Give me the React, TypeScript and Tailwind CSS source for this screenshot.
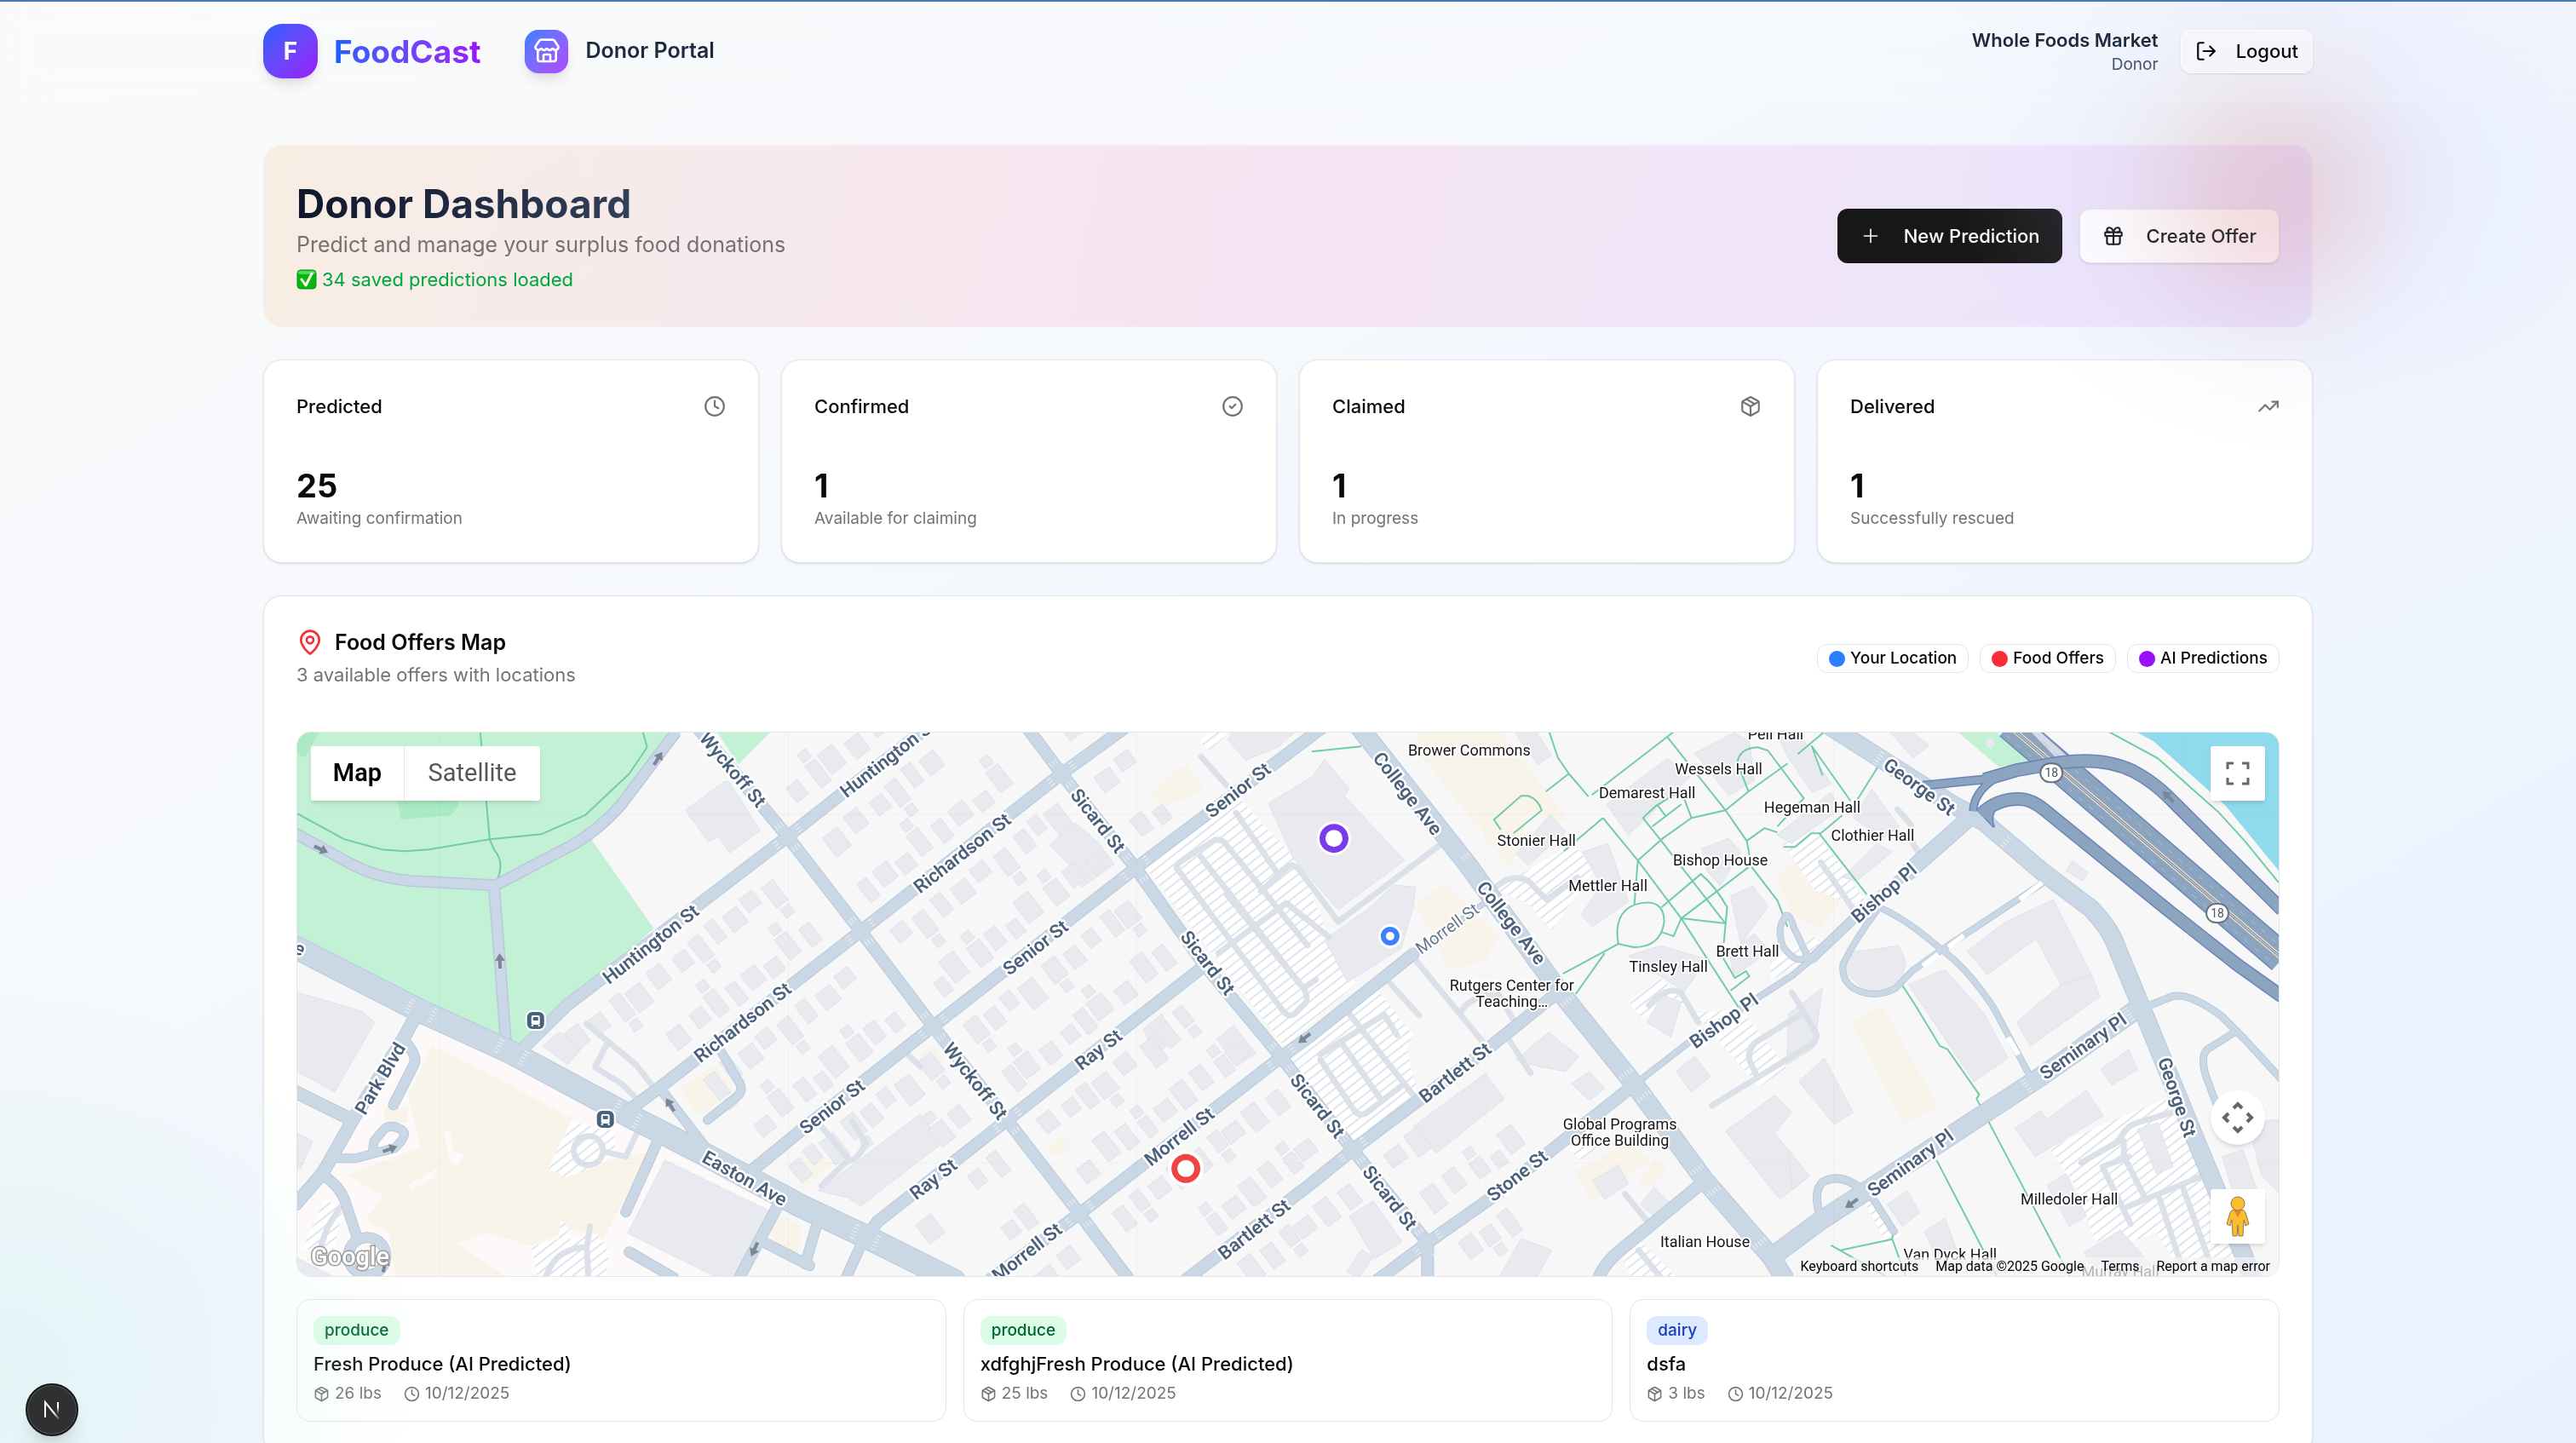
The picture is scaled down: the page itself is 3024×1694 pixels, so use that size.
import React from 'react';
import { CircleCheck, Clock, Gift, LogOut, MapPin, Package, Plus, Store, TrendingUp } from 'lucide-react';

type IconType = React.ComponentType<{ className?: string; strokeWidth?: number }>;

interface Stat {
  label: string;
  value: number;
  note: string;
  icon: IconType;
}

const STATS: Stat[] = [
  { label: 'Predicted', value: 25, note: 'Awaiting confirmation', icon: Clock },
  { label: 'Confirmed', value: 1, note: 'Available for claiming', icon: CircleCheck },
  { label: 'Claimed', value: 1, note: 'In progress', icon: Package },
  { label: 'Delivered', value: 1, note: 'Successfully rescued', icon: TrendingUp },
];

const LEGEND = [
  { label: 'Your Location', dot: 'bg-[#2b7fff]' },
  { label: 'Food Offers', dot: 'bg-[#fb2c36]' },
  { label: 'AI Predictions', dot: 'bg-[#9810fa]' },
];

const OFFERS = [
  { type: 'produce', badge: 'bg-[#dcfce7] text-[#016630]', title: 'Fresh Produce (AI Predicted)', weight: '26 lbs', date: '10/12/2025' },
  { type: 'produce', badge: 'bg-[#dcfce7] text-[#016630]', title: 'xdfghjFresh Produce (AI Predicted)', weight: '25 lbs', date: '10/12/2025' },
  { type: 'dairy', badge: 'bg-[#dbeafe] text-[#193cb8]', title: 'dsfa', weight: '3 lbs', date: '10/12/2025' },
];

/* ---------- map data ---------- */

const ROADS: { d: string; w: number }[] = [
  { d: 'M815 850 L924 982 L1010 1093 L1095 1205 L1182 1315 L1267 1425 L1325 1502', w: 13 },
  { d: 'M1204 852 L1246 908 L1333 1019 L1414 1133 L1504 1241 L1588 1350 L1676 1459 L1676 1502', w: 13 },
  { d: 'M606 1238 L665 1180 L924 982 L986 933 L1096 848', w: 13 },
  { d: 'M738 1303 L776 1275 L1010 1093 L1246 908 L1326 850', w: 13 },
  { d: 'M880 1376 L940 1327 L1062 1231 L1095 1205 L1333 1019 L1560 848', w: 13 },
  { d: 'M1016 1453 L1030 1434 L1182 1315 L1412 1135', w: 13 },
  { d: 'M1160 1504 L1267 1425 L1504 1241 L1540 1215 L1659 1120', w: 13 },
  { d: 'M1659 1120 L1747 1057', w: 5 },
  { d: 'M1393 1502 L1540 1389 L1588 1350 L1747 1231 L1829 1165', w: 13 },
  { d: 'M1616 1504 L1676 1459 L1750 1407 L1917 1275', w: 13 },
  { d: 'M1917 1275 L1984 1223 L2106 1144 L2132 1122', w: 6 },
  { d: 'M2128 1125 L2177 1078 L2253 1013', w: 10 },
  { d: 'M2240 1024 L2307 965', w: 18 },
  { d: 'M1877 1502 Q1880 1488 1900 1470 L2001 1387', w: 13 },
  { d: 'M1590 846 L1724 1016 L1829 1161 L1919 1273 L2001 1385 L2080 1476 L2096 1502', w: 21 },
  { d: 'M2080 1476 L2138 1433 L2192 1398 L2398 1263 L2513 1182', w: 21 },
  { d: 'M2145 850 L2291 943 L2330 965 L2398 1023 L2456 1067 Q2480 1092 2488 1118 L2515 1183 L2578 1337 L2636 1477 L2646 1504', w: 20 },
  { d: 'M340 1109 L493 1187 L596 1234 L738 1310 L826 1355 L940 1416 L1016 1452 L1120 1504', w: 26 },
  { d: 'M487 1193 L474 1217 L416 1310 L378 1377 L346 1414', w: 14 },
  { d: 'M340 1279 L413 1315', w: 14 },
  { d: 'M474 1222 Q490 1240 485 1250 L461 1297', w: 11 },
  { d: 'M394 1360 L416 1360 L462 1348 Q480 1332 470 1326 Q455 1318 448 1328 L438 1340 L436 1354', w: 9 },
  { d: 'M378 1380 Q398 1392 404 1410 L418 1452', w: 11 },
  { d: 'M430 1453 a22 22 0 1 0 0.1 0', w: 11 },
  { d: 'M770 1343 L734 1423', w: 11 },
  { d: 'M914 1413 L868 1499', w: 12 },
  { d: 'M899 1460 L950 1486', w: 11 },
  { d: 'M738 1470 L790 1500', w: 11 },
  { d: 'M845 1233 L868 1272 Q872 1282 864 1288 L830 1315', w: 9 },
  { d: 'M776 1280 L826 1345', w: 10 },
  { d: 'M962 1425 L945 1484', w: 11 },
  { d: 'M1012 1458 L992 1502', w: 11 },
  { d: 'M2211 1067 Q2240 1080 2280 1115 Q2310 1136 2341 1183 L2383 1262', w: 6 },
  { d: 'M2203 1070 Q2180 1100 2164 1132 Q2162 1150 2176 1160 Q2201 1174 2226 1160 L2245 1140 L2280 1115 L2398 1037', w: 6 },
  { d: 'M2099 1075 Q2085 1085 2093 1110 Q2110 1135 2122 1122 L2106 1088 Q2102 1072 2096 1075', w: 6 },
  { d: 'M2525 1180 L2550 1170 Q2570 1164 2609 1193 L2636 1220 L2680 1268', w: 7 },
  { d: 'M2624 1212 L2592 1232 Q2584 1240 2590 1262 L2608 1310', w: 7 },
  { d: 'M2138 1430 Q2128 1400 2140 1388 Q2160 1376 2186 1396', w: 8 },
  { d: 'M2196 1402 L2224 1446', w: 7 },
];

const PARK_ROADS = [
  'M340 975 L409 1013 Q440 1030 481 1034 L581 1039 L669 993 Q700 976 728 945 L793 859',
  'M579 1040 L586 1128 L593 1222',
];

const DRIVES = [
  'M1382 1020 Q1380 1014 1388 1010 L1426 986 Q1434 984 1440 992 L1535 1110',
  'M1382 1020 L1504 1184 Q1512 1196 1520 1190 L1533 1177 Q1536 1170 1530 1160 L1440 1050',
  'M1409 1005 L1530 1160 L1545 1150',
  'M1430 1119 L1510 1060 L1560 1100',
  'M1480 1046 L1514 1016 Q1520 1014 1526 1022 L1571 1082 L1689 993',
  'M1451 954 L1499 1024',
  'M1410 888 L1440 922',
  'M1550 1238 L1572 1224 L1625 1191 L1640 1215',
  'M1550 1244 L1590 1304 Q1597 1312 1605 1306 L1645 1275',
  'M1574 1223 L1620 1289',
  'M1584 1190 L1664 1292',
  'M1628 1150 L1666 1192',
  'M1661 1126 L1740 1222',
  'M1714 1190 Q1724 1168 1760 1168 L1776 1196',
  'M1770 1218 L1797 1260',
  'M1740 1052 L1768 1033 Q1790 1026 1800 1040 L1816 1056 L1852 1030',
  'M688 1202 L746 1250 L767 1277',
  'M711 1227 L698 1253 L730 1273 L750 1293',
  'M690 1334 a17 17 0 1 0 0.1 0 M708 1352 L734 1358 L750 1324',
  'M640 1500 Q650 1466 688 1464 L692 1440 M688 1464 L690 1500',
  'M398 1418 L384 1440 L376 1462',
  'M964 1323 L996 1361 Q1004 1366 1016 1342 L1000 1317',
  'M994 1363 L964 1392',
  'M1062 1235 L1080 1252',
  'M1936 1180 Q1958 1156 1974 1166 L1994 1200',
  'M2228 950 L2244 968 L2246 990 L2256 1006',
  'M2138 1012 L2178 1070',
  'M2010 1298 L2062 1266 L2130 1224 Q2136 1216 2130 1208 L2104 1165',
  'M2062 1262 L2054 1244 Q2052 1230 2064 1222 L2112 1192',
  'M1908 1402 L1936 1436',
  'M1924 1468 L1950 1500',
  'M2444 1365 L2488 1340 Q2496 1322 2510 1318 L2551 1306',
  'M2494 1340 L2494 1357 L2519 1407',
  'M2469 1370 L2500 1358 M2469 1370 L2502 1437',
  'M2498 1417 L2588 1380',
  'M2536 1407 L2563 1490',
  'M2563 1393 L2598 1490',
];

const LOTS = [
  '1344,1018 1455,937 1545,1035 1540,1050 1560,1100 1592,1155 1508,1228',
  '1512,1248 1616,1161 1659,1215 1651,1231 1666,1289 1586,1340',
  '1408,872 1420,858 1446,858 1420,880',
  '670,1317 720,1328 722,1355 700,1370 663,1382 643,1372',
  '623,1463 655,1455 657,1434 664,1436 668,1455 700,1448 714,1470 710,1500 630,1500',
  '380,1408 402,1420 390,1470 354,1466',
  '1756,1044 1846,990 1872,1020 1822,1092 1796,1062',
  '1912,1176 1950,1148 2000,1200 1966,1172 1928,1196',
  '1990,1190 2044,1184 2098,1254 2066,1276',
  '2094,990 2132,974 2192,1060 2170,1060 2130,1044',
  '1900,1466 1922,1454 1970,1500 1916,1500',
  '2406,1347 2548,1288 2590,1380 2630,1484 2556,1484 2532,1447 2502,1458 2460,1457 2437,1393',
  '2190,1412 2200,1408 2232,1450 2216,1462',
  '1842,1350 1862,1334 1886,1340 1856,1362',
  '2078,1130 2130,1100 2140,1116 2080,1150',
];

const TAN = [
  '506,1228 585,1267 671,1313 642,1372 761,1353 707,1457 673,1443 623,1463 570,1447 535,1460 593,1498 464,1499 455,1447 428,1433 449,1403 405,1380 493,1347 478,1287',
  '450,1300 478,1300 478,1318 450,1318',
  '1659,875 1668,859 1762,859 1842,964 1793,954 1784,1000 1770,1016',
  '1350,930 1392,897 1414,926 1366,948',
  '1660,1066 1694,1036 1722,1062 1760,1100 1744,1128 1700,1140 1684,1096',
  '798,1278 838,1250 862,1280 818,1310',
  '1080,1238 1092,1226 1108,1246 1096,1256',
  '940,1352 954,1342 976,1368 940,1396',
  '1228,1350 1246,1334 1258,1344 1240,1360',
  '1848,1376 1912,1340 1938,1362 1870,1412',
  '1924,1388 1944,1360 1958,1372 1936,1396',
  '2085,1030 2104,1010 2150,1044 2160,1060 2136,1092 2104,1072',
  '2174,1200 2210,1180 2276,1300 2236,1320',
  '890,1430 914,1426 940,1440 936,1474 912,1462',
];

const BUILDINGS = [
  '348,1165 424,1187 439,1200 392,1282 348,1258',
  '348,1330 366,1340 352,1372 348,1372',
  '348,1477 392,1500 348,1500',
  '780,1362 903,1422 868,1500 837,1498 736,1448',
  '852,917 855,917 892,975 856,1001 843,982 831,988 804,951 850,917',
  '636,1228 656,1212 684,1228 666,1250',
  '1489,943 1540,912 1555,891 1584,926 1578,934 1649,1010 1571,1068 1518,1007',
  '1441,868 1448,859 1520,859 1500,877 1462,892',
  '1555,1103 1610,1064 1636,1039 1662,1041 1659,1066 1645,1113 1582,1153',
  '1232,992 1250,975 1262,966 1288,988 1308,1014 1270,1042 1254,1014',
  '960,1398 1080,1308 1106,1342 1010,1416 994,1406',
  '1342,1208 1364,1190 1378,1222 1356,1238',
  '1428,1220 1448,1204 1474,1236 1452,1252',
  '1660,1322 1744,1260 1766,1290 1686,1354',
  '1780,1244 1818,1212 1854,1240 1838,1258 1806,1252',
  '1845,1272 1866,1258 1884,1278 1866,1292',
  '1584,1428 1612,1410 1646,1458 1614,1478',
  '1760,1500 1786,1454 1822,1468 1804,1500',
  '1778,859 1804,859 1822,886 1806,898',
  '1886,944 1958,890 1984,912 1912,980',
  '1990,884 2036,860 2054,870 2060,916 2030,934',
  '2086,859 2112,859 2150,920 2128,930 2100,890',
  '2086,980 2150,930 2160,950 2104,990',
  '1780,1002 1820,956 1838,976 1794,1016',
  '1858,1000 1888,990 1912,1058 1870,1088 1856,1074 1880,1040',
  '1998,996 2030,984 2044,1000 2020,1040 2004,1022',
  '2032,1052 2058,1040 2076,1064 2044,1108',
  '2030,1118 2060,1096 2078,1116 2036,1146',
  '1912,1122 1950,1110 2004,1126 1978,1164',
  '1934,1200 1952,1168 1974,1176 1962,1218',
  '1968,1258 1990,1240 2008,1264 1986,1282',
  '2026,1328 2084,1286 2104,1306 2084,1330 2124,1382 2090,1408',
  '2164,1030 2204,990 2222,1000 2180,1034',
  '2176,960 2198,926 2230,970 2210,984',
  '2219,859 2245,859 2265,875 2247,890',
  '2172,1118 2230,1110 2238,1130 2230,1158 2190,1164 2166,1140',
  '2310,1117 2355,1082 2411,1056 2456,1144 2420,1156 2391,1102 2334,1144',
  '2420,1156 2456,1144 2466,1170 2384,1228 2368,1200',
  '2241,1156 2284,1138 2330,1190 2358,1242 2318,1270',
  '2112,1270 2142,1242 2176,1306 2154,1320',
  '2366,1325 2396,1304 2404,1314 2450,1280 2470,1310 2390,1358',
  '2467,1255 2500,1232 2510,1256 2480,1274',
  '2404,1392 2426,1378 2450,1428 2430,1440',
  '2510,1326 2534,1318 2552,1370 2532,1378',
  '2448,1470 2490,1444 2530,1490 2530,1500 2460,1500',
  '2216,1414 2240,1398 2254,1424 2234,1440',
  '2260,1446 2284,1430 2306,1490 2280,1490',
  '2610,1358 2634,1350 2650,1396 2624,1406',
  '2640,1320 2676,1314 2676,1400 2656,1380',
  '2100,1350 2124,1380 2104,1396',
  '2426,1022 2434,1010 2452,1024 2446,1034',
  '2100,1190 2140,1160 2130,1230 2098,1250',
  '1926,1414 1942,1394 1962,1414 1944,1430',
  '1870,1386 1900,1368 1912,1390 1884,1408',
];

const PATHS = [
  'M348 955 L403 985 L447 997 L474 999 L503 997 L574 985 L635 979 L686 957 L738 908 L759 877 L754 859',
  'M563 859 L574 985 L579 997 Q592 1012 583 1032',
  'M1540 882 L1598 876',
  'M1819 859 L1829 889 L1842 908 L1865 935 M1815 929 L1842 908',
  'M1965 859 L1869 933 M1957 864 L2026 951 L2051 987 L2057 1018 L2087 1057 L2099 1088',
  'M1882 960 L1923 1010 L1974 1078 L2041 1182 M1882 960 L1836 999 M1923 1010 L1919 1061',
  'M1919 1062 Q1954 1052 1954 1082 Q1950 1112 1918 1112 L1900 1108 Q1894 1072 1919 1062',
  'M1900 1108 L1835 1143 M1884 1119 L1850 1167',
  'M1923 1010 L1951 985 L1986 960 L2026 951 L2053 929 L2099 896',
  'M1951 1065 L1997 1026 Q2014 1040 2028 1065 L2024 1107',
  'M1949 985 L2026 1084 L1974 1078 L2053 1018',
  'M1949 985 L1929 960 L1944 946 L1974 928 L1986 960 M1946 945 L1956 958 M1940 970 L1974 944',
  'M1974 1078 L1965 1099 L1951 1094',
  'M1777 978 L1810 951 Q1806 938 1794 934 L1786 934 L1754 962 L1762 974',
  'M2053 929 L2040 895 Q2042 878 2064 877 L2076 881 L2118 937 L2087 970',
  'M2051 987 L2072 972 L2087 977 M2094 994 L2108 994 L2127 978 L2138 978 L2163 957 M2136 978 L2192 1050',
  'M2020 1119 L2037 1148 L2050 1140 L2054 1146 L2032 1163',
  'M2127 875 L2173 940 M2111 885 L2142 859 M2205 900 L2180 940 M2127 875 L2140 910',
  'M2234 1157 L2249 1180 L2278 1228 L2287 1232 L2324 1285 L2321 1290 L2431 1499',
  'M2274 1362 L2345 1499',
  'M2161 1468 L2222 1455 L2224 1440 M2222 1455 L2238 1499 M2150 1462 L2215 1499',
  'M2477 859 L2534 890 L2605 953 L2636 987 L2676 1036',
];

interface StreetLabel {
  t: string;
  x: number;
  y: number;
  r: number;
}

const STREET_LABELS: StreetLabel[] = [
  { t: 'Wyckoff St', x: 860, y: 903, r: 50 },
  { t: 'Huntington St', x: 763, y: 1108, r: -38 },
  { t: 'Huntington St', x: 1042, y: 889, r: -38 },
  { t: 'Richardson St', x: 1129, y: 1001, r: -38 },
  { t: 'Richardson St', x: 871, y: 1200, r: -38 },
  { t: 'Senior St', x: 1215, y: 1112, r: -38 },
  { t: 'Senior St', x: 1453, y: 927, r: -38 },
  { t: 'Senior St', x: 976, y: 1299, r: -38 },
  { t: 'Ray St', x: 1289, y: 1232, r: -38 },
  { t: 'Ray St', x: 1095, y: 1384, r: -38 },
  { t: 'Wyckoff St', x: 1145, y: 1269, r: 52 },
  { t: 'Sicard St', x: 1289, y: 963, r: 52 },
  { t: 'Sicard St', x: 1418, y: 1130, r: 52 },
  { t: 'Sicard St', x: 1547, y: 1298, r: 52 },
  { t: 'Sicard St', x: 1632, y: 1406, r: 52 },
  { t: 'Morrell St', x: 1384, y: 1334, r: -38 },
  { t: 'Morrell St', x: 1205, y: 1470, r: -38 },
  { t: 'Bartlett St', x: 1472, y: 1443, r: -38 },
  { t: 'Bartlett St', x: 1708, y: 1259, r: -38 },
  { t: 'Stone St', x: 1781, y: 1380, r: -38 },
  { t: 'College Ave', x: 1653, y: 931, r: 52 },
  { t: 'College Ave', x: 1775, y: 1083, r: 52 },
  { t: 'Bishop Pl', x: 2024, y: 1198, r: -36 },
  { t: 'Bishop Pl', x: 2212, y: 1048, r: -41 },
  { t: 'George St', x: 2254, y: 923, r: 36 },
  { t: 'George St', x: 2557, y: 1288, r: 71 },
  { t: 'Seminary Pl', x: 2446, y: 1228, r: -35 },
  { t: 'Seminary Pl', x: 2243, y: 1365, r: -36 },
  { t: 'Easton Ave', x: 874, y: 1383, r: 29 },
  { t: 'Park Blvd', x: 445, y: 1266, r: -59 },
  { t: 'e', x: 351, y: 1113, r: 25 },
];

const PLACES: { lines: string[]; x: number; y: number }[] = [
  { lines: ['Brower Commons'], x: 1725, y: 881 },
  { lines: ['Pell Hall'], x: 2085, y: 862 },
  { lines: ['Wessels Hall'], x: 2018, y: 903 },
  { lines: ['Demarest Hall'], x: 1934, y: 931 },
  { lines: ['Hegeman Hall'], x: 2128, y: 948 },
  { lines: ['Stonier Hall'], x: 1804, y: 987 },
  { lines: ['Bishop House'], x: 2020, y: 1010 },
  { lines: ['Mettler Hall'], x: 1888, y: 1040 },
  { lines: ['Clothier Hall'], x: 2199, y: 981 },
  { lines: ['Brett Hall'], x: 2052, y: 1117 },
  { lines: ['Tinsley Hall'], x: 1959, y: 1135 },
  { lines: ['Rutgers Center for', 'Teaching…'], x: 1775, y: 1157 },
  { lines: ['Global Programs', 'Office Building'], x: 1902, y: 1320 },
  { lines: ['Italian House'], x: 2002, y: 1458 },
  { lines: ['Milledoler Hall'], x: 2430, y: 1408 },
  { lines: ['Van Dyck Hall'], x: 2290, y: 1473 },
  { lines: ['Murray Hall'], x: 2490, y: 1493 },
];

const ARROWS = [
  [376, 997, 25], [772, 890, -57], [586, 1128, -92], [457, 1349, -20], [786, 1297, -122],
  [885, 1467, 115], [1531, 1219, 142], [2546, 935, -135], [2174, 1413, 145], [451, 1485, -75],
];

// x1, y1, x2, y2, sides: 0 both, 1 below the street, -1 above it
const HOUSE_ROWS = [
  [640, 1205, 910, 998, 1], [940, 970, 1085, 857, 0], [800, 1258, 1000, 1102, 0],
  [1022, 1084, 1234, 918, 0], [1260, 898, 1320, 855, 0], [900, 1360, 1082, 1215, 0],
  [1108, 1195, 1322, 1028, 0], [1345, 1010, 1400, 968, -1], [1110, 1372, 1170, 1325, 0],
  [1194, 1306, 1402, 1144, 0], [1190, 1484, 1256, 1434, 0], [1280, 1415, 1492, 1250, 0],
  [1430, 1475, 1578, 1360, 0], [1600, 1342, 1660, 1298, 1], [1688, 1450, 1830, 1344, -1],
  [1690, 1450, 1780, 1384, 1], [1050, 1424, 1090, 1394, 1], [1600, 1440, 1650, 1474, 1],
];

const houses: { x: number; y: number; w: number; h: number; r: number }[] = [];
HOUSE_ROWS.forEach(([x1, y1, x2, y2, side], row) => {
  const len = Math.hypot(x2 - x1, y2 - y1);
  const ux = (x2 - x1) / len;
  const uy = (y2 - y1) / len;
  const r = (Math.atan2(uy, ux) * 180) / Math.PI;
  [-1, 1].forEach((s) => {
    if (side !== 0 && side !== s) return;
    let t = 22;
    let i = row * 3 + s;
    while (t < len - 14) {
      i += 1;
      const w = 14 + ((i * 7) % 9);
      const h = 18 + ((i * 11) % 15);
      const off = 19 + h / 2 + ((i * 5) % 9);
      houses.push({ x: x1 + ux * t - uy * off * s, y: y1 + uy * t + ux * off * s, w, h, r });
      if (i % 4 === 0) {
        const far = off + h / 2 + 10;
        houses.push({ x: x1 + ux * t - uy * far * s, y: y1 + uy * t + ux * far * s, w: 12, h: 12, r });
      }
      t += w + 6 + ((i * 3) % 10);
    }
  });
});

function BusStop({ x, y }: { x: number; y: number }) {
  return (
    <g transform={`translate(${x} ${y})`}>
      <rect x="-12" y="-12" width="24" height="24" rx="8" fill="#fff" />
      <rect x="-10" y="-10" width="20" height="20" rx="6" fill="#47627a" />
      <rect x="-5" y="-6" width="10" height="11" rx="2" fill="#fff" />
      <rect x="-3" y="-4" width="6" height="4" fill="#47627a" />
      <path d="M-4 5 v2 M4 5 v2" stroke="#fff" strokeWidth="2" />
    </g>
  );
}

function Ring({ x, y, outer, inner, halo, color }: { x: number; y: number; outer: number; inner: number; halo: number; color: string }) {
  return (
    <g>
      <circle cx={x} cy={y} r={halo} fill="#fff" />
      <circle cx={x} cy={y} r={outer} fill={color} />
      <circle cx={x} cy={y} r={inner} fill="#fff" />
    </g>
  );
}

function StreetMap() {
  return (
    <svg className="block w-full h-full" viewBox="348 859 2328 640" preserveAspectRatio="xMidYMid slice" role="img" aria-label="Map">
      <defs>
        <pattern id="lot" width="9" height="9" patternUnits="userSpaceOnUse" patternTransform="rotate(-38)">
          <rect width="9" height="9" fill="#fff" />
          <rect width="9" height="2" fill="#e1e4eb" />
        </pattern>
      </defs>
      <rect x="348" y="859" width="2328" height="640" fill="#f7f7f7" />

      {/* parks and water */}
      <polygon points="348,859 800,859 735,945 692,983 767,1090 604,1234 348,1103" fill="#c3f1d5" />
      <polygon points="841,859 904,859 866,897" fill="#c3f1d5" />
      <polygon points="348,859 374,859 357,889 348,886" fill="#aaebc4" />
      <polygon points="464,933 537,933 537,947 528,957 470,962" fill="#aaebc4" />
      <polygon points="2299,859 2345,859 2383,895 2347,900" fill="#c3f1d5" />
      <polygon points="2330,872 2337,865 2343,873 2337,879" fill="#e8eaef" />
      <polygon points="2509,859 2529,870 2613,945 2676,1022 2676,859" fill="#90daee" />

      {/* hospital grounds */}
      <polygon points="487,1195 600,1250 772,1345 914,1420 872,1500 348,1500 348,1415 400,1340" fill="#fef9f9" />
      {TAN.map((p) => <polygon key={p} points={p} fill="#f8f4e9" />)}
      <polygon points="520,1330 527,1326 532,1352 543,1356 536,1370 528,1366" fill="#fef9f9" />
      <polygon points="478,1391 512,1372 510,1382 482,1398" fill="#fef9f9" />
      {LOTS.map((p) => <polygon key={p} points={p} fill="url(#lot)" />)}

      {BUILDINGS.map((p) => (
        <polygon key={p} points={p} fill="#e8eaef" stroke="#dfe2e9" strokeWidth="1" />
      ))}
      {houses.map((h, i) => (
        <rect key={i} x={-h.w / 2} y={-h.h / 2} width={h.w} height={h.h} fill="#e8eaef" stroke="#e0e3ea" strokeWidth="1" transform={`translate(${h.x} ${h.y}) rotate(${h.r})`} />
      ))}

      {DRIVES.map((d) => <path key={d} d={d} fill="none" stroke="#dce0e9" strokeWidth="7" strokeLinecap="round" strokeLinejoin="round" />)}
      {PATHS.map((d) => <path key={d} d={d} fill="none" stroke="#72cba9" strokeWidth="2" strokeLinejoin="round" />)}

      {/* streets: casing first, then the surface */}
      {PARK_ROADS.map((d) => <path key={d} d={d} fill="none" stroke="#bbc7dd" strokeWidth="14" />)}
      {PARK_ROADS.map((d) => <path key={d} d={d} fill="none" stroke="#cad7e6" strokeWidth="11" />)}
      {ROADS.map((r) => (
        <path key={r.d} d={r.d} fill="none" stroke="#b9c9da" strokeWidth={r.w + 2} strokeLinecap="round" strokeLinejoin="round" />
      ))}
      {ROADS.map((r) => (
        <path key={r.d} d={r.d} fill="none" stroke="#cad8e5" strokeWidth={r.w} strokeLinecap="round" strokeLinejoin="round" />
      ))}
      <path d="M2372 1056 L2398 1036 M2288 1112 L2306 1098 M2258 1134 L2276 1120 M2358 1218 L2370 1238" stroke="#fff" strokeWidth="6" />

      {/* highway 18 */}
      <g fill="none">
        <path d="M2360 850 L2680 1125" stroke="#6a85b5" strokeWidth="37" />
        <path d="M2360 850 L2680 1125" stroke="#8ba4c0" strokeWidth="34" />
        <path d="M2385 859 L2396 859 L2428 888 L2418 893 Z" fill="#d4dae6" />
        <path d="M2365 857 L2680 1125" stroke="#f0dcae" strokeWidth="6" />
        <path d="M2365 857 L2680 1125" stroke="#6a85b5" strokeWidth="3" />
        <path d="M2365 857 L2680 1125" stroke="#e9eef5" strokeWidth="1" />
        <path d="M2356 863 L2670 1132 M2376 852 L2680 1112" stroke="#b4c4d8" strokeWidth="1" strokeDasharray="6 10" />
      </g>

      {/* ramps */}
      {['#6a85b5', '#8ba4c0'].map((c, i) => (
        <g key={c} fill="none" stroke={c} strokeLinejoin="round">
          <path d="M2258 922 L2337 914" strokeWidth={i ? 8 : 11} />
          <path d="M2330 915 L2368 904 L2420 895 Q2470 888 2505 905 Q2530 918 2551 940 L2680 1068" strokeWidth={i ? 13 : 16} />
          <path d="M2342 914 Q2318 930 2317 952" strokeWidth={i ? 7 : 10} />
          <path d="M2326 956 Q2346 936 2375 938 Q2388 940 2400 950 L2548 1070 L2628 1133 L2680 1170" strokeWidth={i ? 13 : 16} />
          <path d="M2324 952 L2346 944 Q2336 958 2341 970 Z" fill={c} strokeWidth={i ? 0 : 3} />
        </g>
      ))}

      {/* zebra crossings */}
      {[
        [924, 982], [1010, 1093], [1095, 1205], [1182, 1315], [1267, 1425], [1246, 908],
        [1333, 1019], [1504, 1241], [1588, 1350], [1676, 1459],
      ].map(([x, y]) => (
        <g key={x} transform={`translate(${x} ${y}) rotate(-38)`} stroke="#eef2f7" strokeWidth="1">
          <path d="M-19 -4 h6 M-19 0 h6 M-19 4 h6 M13 -4 h6 M13 0 h6 M13 4 h6 M-4 -19 v6 M0 -19 v6 M4 -19 v6 M-4 13 v6 M0 13 v6 M4 13 v6" />
        </g>
      ))}
      {[
        [585, 1228, 28], [614, 1242, 28], [480, 1181, 28], [507, 1192, 28], [724, 1300, 28], [747, 1316, 28],
        [1003, 1446, 25], [1028, 1459, 25], [1724, 1003, 52], [1840, 1175, 52], [1909, 1261, 52], [1930, 1287, 52],
        [1992, 1373, 52], [2012, 1399, 52], [2066, 1460, 52], [2380, 1275, -35], [2500, 1191, -35], [2206, 890, 36], [2354, 990, 40],
      ].map(([x, y, r]) => (
        <path key={`${x}-${y}`} transform={`translate(${x} ${y}) rotate(${r})`} d="M-3 -8 h6 M-3 -4 h6 M-3 0 h6 M-3 4 h6 M-3 8 h6" stroke="#eef2f7" strokeWidth="1" />
      ))}

      {ARROWS.map(([x, y, r]) => (
        <path key={`${x}-${y}`} transform={`translate(${x} ${y}) rotate(${r})`} d="M-9 -2 H0 V-6 L9 0 L0 6 V2 H-9 Z" fill="#7b8796" />
      ))}
      <path d="M348 956 H2676 M348 1366 H2676 M515 859 V1499 M925 859 V1499 M1334 859 V1499 M1744 859 V1499 M2153 859 V1499 M2563 859 V1499" stroke="#8a94a0" strokeOpacity="0.07" strokeWidth="1" />
      <BusStop x={628} y={1198} />
      <BusStop x={710} y={1314} />

      {[[2409, 907], [2604, 1072]].map(([x, y]) => (
        <g key={x}>
          <rect x={x - 13} y={y - 11} width="26" height="22" rx="11" fill="#fff" stroke="#6b7280" strokeWidth="2" />
          <text x={x} y={y + 5} textAnchor="middle" fontSize="14" className="font-[Roboto]" fill="#4b5563">18</text>
        </g>
      ))}

      <g className="font-[Roboto]" textAnchor="middle" stroke="#fff" strokeLinejoin="round" style={{ paintOrder: 'stroke' }}>
        <g fontSize="22" fontWeight="600" fill="#4b607a" strokeWidth="5">
          {STREET_LABELS.map((l) => (
            <text key={`${l.x}-${l.y}`} transform={`translate(${l.x} ${l.y}) rotate(${l.r})`} y="8">{l.t}</text>
          ))}
        </g>
        <text transform="translate(1699 1090) rotate(-36)" y="7" fontSize="20" fill="#64758c" strokeWidth="4">Morrell St</text>
        <g fontSize="18" fill="#151515" strokeWidth="4">
          {PLACES.map((p) => (
            <text key={p.lines[0]} x={p.x} y={p.y + 6}>
              {p.lines.map((line, i) => <tspan key={line} x={p.x} dy={i ? 19 : 0}>{line}</tspan>)}
            </text>
          ))}
        </g>
      </g>

      <Ring x={1566} y={984} outer={17} inner={10} halo={20} color="#7c3aed" />
      <Ring x={1632} y={1099} outer={11} inner={5} halo={14} color="#3b82f6" />
      <Ring x={1392} y={1372} outer={17} inner={10} halo={21} color="#ef4444" />

      <text x="364" y="1485" fontSize="29" className="font-[Roboto]" fontWeight="500" fill="#fff" stroke="#9a9a9a" strokeWidth="3" style={{ paintOrder: 'stroke' }}>Google</text>
    </svg>
  );
}

function MapControls() {
  return (
    <div className="font-[Roboto,sans-serif]">
      <div className="absolute top-4 left-4 flex h-16 rounded-[3px] bg-white shadow-md text-[29px]">
        <button type="button" className="w-[110px] font-semibold text-black border-r border-gray-200">Map</button>
        <button type="button" className="w-[159px] text-[#565656]">Satellite</button>
      </div>
      <button type="button" aria-label="Toggle fullscreen view" className="absolute top-4 right-4 flex size-16 items-center justify-center rounded-[3px] bg-white shadow-md">
        <svg className="size-7" viewBox="0 0 28 28" fill="none" stroke="#666" strokeWidth="3">
          <path d="M2 9 V2 H9 M19 2 H26 V9 M26 19 V26 H19 M9 26 H2 V19" />
        </svg>
      </button>
      <button type="button" aria-label="Map camera controls" className="absolute right-4 bottom-[154px] flex size-16 items-center justify-center rounded-full bg-white shadow-md">
        <svg className="size-10" viewBox="0 0 40 40" fill="none" stroke="#666" strokeWidth="4">
          <path d="M15 9 L20 4 L25 9 M15 31 L20 36 L25 31 M9 15 L4 20 L9 25 M31 15 L36 20 L31 25" />
        </svg>
      </button>
      <button type="button" aria-label="Drag Pegman onto the map to open Street View" className="absolute right-4 bottom-[38px] flex size-16 items-center justify-center rounded-[3px] bg-white shadow-md">
        <svg className="h-12 w-7" viewBox="0 0 28 48">
          <path d="M9 16 H19 Q23 17 24 23 L27 33 L23 35 L21 28 L20 47 H15 L14 34 L13 47 H8 L7 28 L5 35 L1 33 L4 23 Q5 17 9 16 Z" fill="#fbbc2f" stroke="#8a7a5c" strokeWidth="1" />
          <path d="M9 16 H19 L14 25 Z" fill="#e58034" />
          <circle cx="14" cy="9" r="8" fill="#fbbc2f" stroke="#8a7a5c" strokeWidth="1" />
        </svg>
      </button>
      <div className="absolute right-0 bottom-0 flex h-[22px] items-center gap-5 bg-[#f5f5f5]/70 pl-2 pr-2.5 text-[16px] leading-none text-black">
        <button type="button">Keyboard shortcuts</button>
        <span>Map data ©2025 Google</span>
        <a href="#terms">Terms</a>
        <a href="#report">Report a map error</a>
      </div>
    </div>
  );
}

function Header() {
  return (
    <header className="sticky top-0 z-50 border-t-2 border-t-[#4a78b0] border-b border-b-white/30 bg-white/5 backdrop-blur-xl">
      <div className="mx-auto flex w-full max-w-[2458px] items-center justify-between px-[26px] py-[26px]">
        <div className="flex items-center gap-[52px]">
          <a href="#home" className="flex items-center gap-[19px]">
            <span className="flex size-16 items-center justify-center rounded-[22px] bg-linear-to-br from-[#155dfc] to-[#9810fa] text-[28px] font-bold text-white shadow-lg">F</span>
            <span className="bg-linear-to-r from-[#155dfc] to-[#9810fa] bg-clip-text text-[37px] leading-[51px] font-bold text-transparent">FoodCast</span>
          </a>
          <div className="flex items-center gap-5">
            <span className="flex size-[51px] items-center justify-center rounded-2xl bg-linear-to-br from-[#2b7fff] to-[#ad46ff] text-white shadow-lg">
              <Store className="size-8" />
            </span>
            <span className="text-[25px] font-semibold text-[#1d293d]">Donor Portal</span>
          </div>
        </div>
        <div className="flex items-center gap-[26px]">
          <div className="text-right">
            <p className="text-[22px] leading-8 font-semibold text-[#1d293d]">Whole Foods Market</p>
            <p className="text-[19px] leading-[26px] text-[#45556c]">Donor</p>
          </div>
          <button type="button" className="flex h-[51px] items-center gap-[22px] rounded-xl border border-white/50 bg-[#fafafa]/60 px-4 text-[22px] font-medium text-[#0a0a0a] shadow-sm">
            <LogOut className="size-[26px]" />
            Logout
          </button>
        </div>
      </div>
    </header>
  );
}

function Banner() {
  return (
    <section className="flex items-center justify-between rounded-[22px] border border-white/20 bg-linear-to-r from-[#ff8904]/10 via-[#f6339a]/10 to-[#ad46ff]/10 px-[38px] py-[39px]">
      <div>
        <h1 className="w-fit bg-linear-to-r from-[#0f172b] to-[#314158] bg-clip-text text-[46px] leading-[58px] font-bold text-transparent">Donor Dashboard</h1>
        <p className="text-[25px] leading-[38px] text-[#737373]">Predict and manage your surplus food donations</p>
        <p className="mt-1.5 flex items-center gap-1.5 text-[22px] leading-8 text-[#00a63e]">
          <svg className="size-6" viewBox="0 0 24 24" role="img" aria-label="Done">
            <rect x="1" y="1" width="22" height="22" rx="4" fill="#06b80c" stroke="#0a8f1c" strokeWidth="1" />
            <rect x="2" y="2" width="20" height="4" rx="2" fill="#4fdc55" />
            <path d="M6 12 L11 19 L18 5" fill="none" stroke="#fff" strokeWidth="3" strokeLinecap="round" strokeLinejoin="round" />
          </svg>
          34 saved predictions loaded
        </p>
      </div>
      <div className="flex gap-5 text-[22px] font-medium">
        <button type="button" className="flex h-16 items-center gap-[26px] rounded-xl bg-[#171717] px-[26px] text-[#fafafa]">
          <Plus className="size-[26px]" strokeWidth={1.5} />
          New Prediction
        </button>
        <button type="button" className="flex h-16 items-center gap-[26px] rounded-xl border border-[#e5e5e5] bg-white px-[26px] text-[#0a0a0a] shadow-sm">
          <Gift className="size-[26px]" />
          Create Offer
        </button>
      </div>
    </section>
  );
}

const App: React.FC = () => {
  return (
    <div className="relative min-h-screen overflow-x-clip bg-linear-to-br from-[#fafafa] via-[#f3f7fe] to-[#e8f1ff] font-[Inter,sans-serif] text-[#0a0a0a] antialiased">
      {/* soft glows */}
      <div className="pointer-events-none absolute -top-40 -right-40 h-[700px] w-[900px] bg-radial from-[#c9d3ff]/30 to-transparent to-70%" />
      <div className="pointer-events-none absolute top-[1160px] -left-[500px] h-[900px] w-[1000px] bg-radial from-[#d3f1ee]/50 to-transparent to-70%" />
      <div className="pointer-events-none absolute top-24 right-[235px] z-10 size-64 rounded-full bg-linear-to-br from-[#ffb347]/20 to-[#ff4d6d]/25 mix-blend-multiply blur-3xl" />

      <Header />

      <main className="mx-auto flex w-full max-w-[2458px] flex-col gap-[38px] px-[26px] py-[51px]">
        <Banner />

        <section className="grid grid-cols-4 gap-[26px]">
          {STATS.map(({ label, value, note, icon: Icon }) => (
            <div key={label} className="rounded-[22px] border border-[#e5e5e5] bg-white p-[38px] shadow-sm">
              <div className="flex items-center justify-between">
                <h2 className="text-[22px] leading-8 font-medium">{label}</h2>
                <Icon className="size-[26px] text-[#737373]" />
              </div>
              <p className="mt-[52px] text-[38px] leading-[51px] font-bold">{value}</p>
              <p className="text-[19px] leading-[26px] text-[#737373]">{note}</p>
            </div>
          ))}
        </section>

        <section className="rounded-[22px] border border-[#e5e5e5] bg-white p-[38px] shadow-sm">
          <div className="flex items-center justify-between">
            <div>
              <h2 className="flex items-center gap-[13px] text-[25px] leading-8 font-semibold">
                <MapPin className="size-8 text-[#fb2c36]" />
                Food Offers Map
              </h2>
              <p className="mt-1.5 text-[22px] leading-8 text-[#737373]">3 available offers with locations</p>
            </div>
            <ul className="flex gap-[13px]">
              {LEGEND.map((item) => (
                <li key={item.label} className="flex items-center gap-1.5 rounded-xl border border-[#e5e5e5] px-[13px] py-[3px] text-[19px] leading-[26px] font-medium">
                  <span className={`size-[19px] rounded-full ${item.dot}`} />
                  {item.label}
                </li>
              ))}
            </ul>
          </div>

          <div className="relative mt-[51px] h-[640px] overflow-hidden rounded-2xl border border-[#e5e5e5]">
            <StreetMap />
            <MapControls />
          </div>

          <div className="mt-[26px] grid grid-cols-3 gap-5">
            {OFFERS.map((offer) => (
              <article key={offer.title} className="rounded-2xl border border-[#e5e5e5] p-[19px]">
                <span className={`inline-block rounded-xl px-[13px] py-1 align-top text-[19px] leading-[26px] font-medium ${offer.badge}`}>{offer.type}</span>
                <h3 className="mt-1.5 text-[22px] leading-8 font-medium">{offer.title}</h3>
                <div className="mt-1.5 flex items-center gap-[26px] text-[19px] leading-[26px] text-[#737373]">
                  <span className="flex items-center gap-1.5">
                    <Package className="size-[19px]" />
                    {offer.weight}
                  </span>
                  <span className="flex items-center gap-1.5">
                    <Clock className="size-[19px]" />
                    {offer.date}
                  </span>
                </div>
              </article>
            ))}
          </div>
        </section>
      </main>

      <button type="button" aria-label="Open Next.js Dev Tools" className="fixed bottom-2 left-[30px] z-50 flex size-[62px] items-center justify-center rounded-full border-2 border-[#171717] bg-[#2f3032] shadow-xl ring-1 ring-[#555] ring-inset">
        <svg className="size-7" viewBox="0 0 28 28" fill="none" strokeWidth="2">
          <defs>
            <linearGradient id="fade-diagonal" gradientUnits="userSpaceOnUse" x1="6" y1="5" x2="23" y2="26">
              <stop offset="0.6" stopColor="#fff" />
              <stop offset="1" stopColor="#fff" stopOpacity="0" />
            </linearGradient>
            <linearGradient id="fade-down" gradientUnits="userSpaceOnUse" x1="21" y1="5" x2="21" y2="19">
              <stop offset="0.4" stopColor="#fff" />
              <stop offset="1" stopColor="#fff" stopOpacity="0" />
            </linearGradient>
          </defs>
          <path d="M6 23 V5 L23 26" stroke="url(#fade-diagonal)" />
          <path d="M21 5 V19" stroke="url(#fade-down)" />
        </svg>
      </button>
    </div>
  );
};

export default App;
